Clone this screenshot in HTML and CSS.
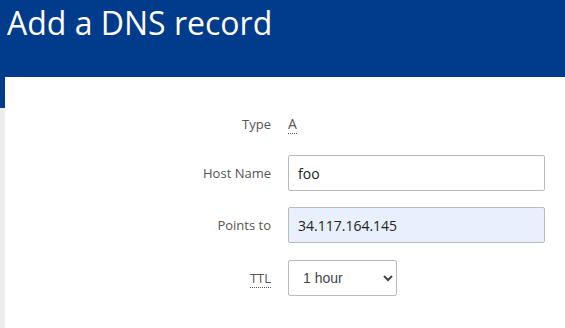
FILE: index.html
```html
<!DOCTYPE html>
<html lang="en">
<head>
  <meta charset="UTF-8">
  <meta name="viewport" content="width=device-width, initial-scale=1.0">
  <title>Add a DNS record</title>
  <link rel="stylesheet" href="styles.css">
</head>
<body>
  <header class="page-header">
    <h1>Add a DNS record</h1>
  </header>

  <div class="page-body">
    <div class="side-strip"></div>
    <main class="panel">
      <form class="record-form">
        <div class="form-row type-row">
          <label class="form-label">Type</label>
          <span class="type-value"><abbr title="Address record">A</abbr></span>
        </div>

        <div class="form-row host-row">
          <label class="form-label" for="hostName">Host Name</label>
          <input type="text" id="hostName" class="text-input" value="foo">
        </div>

        <div class="form-row">
          <label class="form-label" for="pointsTo">Points to</label>
          <input type="text" id="pointsTo" class="text-input autofilled" value="34.117.164.145">
        </div>

        <div class="form-row">
          <label class="form-label" for="ttl"><abbr title="Time to live">TTL</abbr></label>
          <select id="ttl" class="ttl-select">
            <option>1 hour</option>
            <option>1 day</option>
          </select>
        </div>
      </form>
    </main>
  </div>
</body>
</html>
```

FILE: styles.css
```css
/* General Styles */
body {
  margin: 0;
  font-family: "Open Sans", "Noto Sans", sans-serif;
  background-color: #fff;
  color: #333;
}

.page-header {
  background-color: #013b8b;
  height: 77px;
  padding: 0 7px;
}

.page-header h1 {
  margin: 0;
  padding-top: 2px;
  color: #fff;
  font-weight: 400;
  font-size: 32px;
  line-height: 42px;
}

.page-body {
  display: flex;
  min-height: 251px;
}

.side-strip {
  width: 5px;
  background: linear-gradient(#013b8b 0, #013b8b 31px, #eeeeee 31px);
}

.panel {
  flex: 1;
  padding-top: 36px;
}

.form-row {
  display: flex;
  align-items: center;
  margin-bottom: 17px;
}

.type-row {
  margin-bottom: 20px;
}

.host-row {
  margin-bottom: 16px;
}

.form-label {
  width: 266px;
  padding-right: 17px;
  text-align: right;
  font-size: 13px;
  color: #555;
}

.form-label abbr,
.type-value abbr {
  text-decoration: none;
  border-bottom: 1px dotted #555;
}

.type-value {
  font-size: 14px;
  color: #555;
  line-height: 22px;
}

.text-input {
  box-sizing: border-box;
  width: 257px;
  height: 36px;
  padding: 0 9px;
  border: 1px solid #bbb;
  border-radius: 2px;
  font-family: inherit;
  font-size: 14px;
  color: #222;
  background: #fff;
}

.text-input.autofilled {
  background-color: #e8f0fe;
}

.ttl-select {
  box-sizing: border-box;
  width: 109px;
  height: 36px;
  padding: 0 6px 0 10px;
  border: 1px solid #bbb;
  border-radius: 2px;
  font-family: "Liberation Sans", Arial, sans-serif;
  font-size: 14px;
  color: #444;
  background: #fff;
}
```
